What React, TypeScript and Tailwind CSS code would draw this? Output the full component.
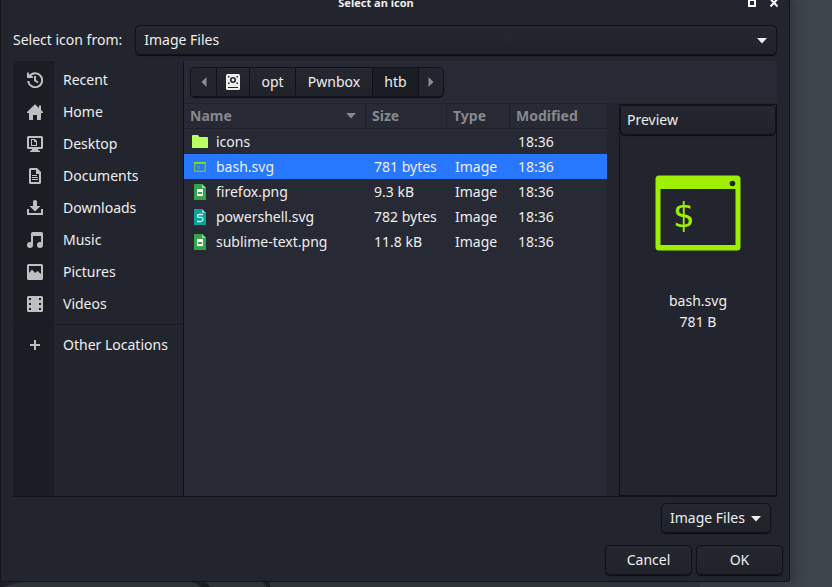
import React from "react";

const places = ["Recent", "Home", "Desktop", "Documents", "Downloads", "Music", "Pictures", "Videos"];

type FileRow = { name: string; size: string; type: string; modified: string; kind: "folder" | "bash" | "png" | "svg" };

const files: FileRow[] = [
  { name: "icons", size: "", type: "", modified: "18:36", kind: "folder" },
  { name: "bash.svg", size: "781 bytes", type: "Image", modified: "18:36", kind: "bash" },
  { name: "firefox.png", size: "9.3 kB", type: "Image", modified: "18:36", kind: "png" },
  { name: "powershell.svg", size: "782 bytes", type: "Image", modified: "18:36", kind: "svg" },
  { name: "sublime-text.png", size: "11.8 kB", type: "Image", modified: "18:36", kind: "png" },
];

const raised =
  "border border-[#101217] rounded-[5px] bg-linear-to-b from-[#262831] to-[#20222a] shadow-[0_1px_1px_#0b0c10]";

function PlaceIcon({ name }: { name: string }) {
  return (
    <svg width="16" height="16" viewBox="0 0 16 16" fill="#bfbfc1" aria-hidden="true">
      {name === "Recent" && (
        <>
          <path d="M2.400 4.200A7 7 0 1 1 1.200 9" fill="none" stroke="#bfbfc1" strokeWidth="2" />
          <path d="M0 .5h1.500L2.500 3 6 4.500V6H0z" />
          <path d="M8 4v4.500l3 2" fill="none" stroke="#bfbfc1" strokeWidth="2" />
        </>
      )}
      {name === "Home" && (
        <path d="M8 .2 0 8v1h2v6.2q0 .8.8.8H6v-5h4v5h3.2q.8 0 .8-.8V9h2V8l-2-2V1.500h-2V4z" />
      )}
      {name === "Desktop" && (
        <>
          <path fillRule="evenodd" d="M1.500 0h13Q16 0 16 1.500V11.500Q16 13 14.500 13H11v1l2 1v1H3v-1l2-1v-1H1.500Q0 13 0 11.500V1.500Q0 0 1.500 0zM2 2v9h12V2z" />
          <path fillRule="evenodd" d="M4 3h4l2 2v5H4zM5 4v5h4V6H7V4z" />
        </>
      )}
      {name === "Documents" && (
        <>
          <path fillRule="evenodd" d="M3.500 0H10l4 4v10.500Q14 16 12.500 16h-9Q2 16 2 14.500v-13Q2 0 3.500 0zM4 2v12h8V6H9V2z" />
          <path d="M5 7h5v1H5zM5 9h6v1H5zM5 11h6v1H5z" />
        </>
      )}
      {name === "Downloads" && (
        <>
          <path d="M6 1.500Q6 0 8 0t2 1.500V6h3.500L8 11.500 2.500 6H6z" />
          <path d="M0 9h2v4h12V9h2v6H0z" />
        </>
      )}
      {name === "Music" && (
        <>
          <path d="M4 1.500Q4 0 5.500 0h9Q16 0 16 1.500V12h-2V4H6v9H4z" />
          <circle cx="3" cy="13" r="3" />
          <circle cx="13" cy="13" r="3" />
        </>
      )}
      {name === "Pictures" && (
        <path fillRule="evenodd" d="M1.500 0h13Q16 0 16 1.500v13Q16 16 14.500 16h-13Q0 16 0 14.500v-13Q0 0 1.500 0zM2 2v7l3-3.500L8 9l2.500-2L14 10V2z" />
      )}
      {name === "Videos" && (
        <path
          fillRule="evenodd"
          d="M1.500 0h13Q16 0 16 1.500v13Q16 16 14.500 16h-13Q0 16 0 14.500v-13Q0 0 1.500 0zM2 2v2h2V2zM2 7v2h2V7zM2 12v2h2v-2zM12 2v2h2V2zM12 7v2h2V7zM12 12v2h2v-2z"
        />
      )}
      {name === "Other Locations" && <path d="M7 3h2v4h4v2H9v4H7V9H3V7h4z" />}
    </svg>
  );
}

function Place({ name }: { name: string }) {
  return (
    <li>
      <button type="button" className="flex h-8 w-full items-center pl-[14px] text-left">
        <PlaceIcon name={name} />
        <span className="ml-5">{name}</span>
      </button>
    </li>
  );
}

function FileIcon({ kind }: { kind: FileRow["kind"] }) {
  return (
    <svg width="16" height="16" viewBox="0 0 16 16" className="shrink-0" aria-hidden="true">
      {kind === "folder" && <path d="M0 2q0-1 1-1h5l1.500 2H15q1 0 1 1v10H0z" fill="#b9ff66" />}
      {kind === "bash" && (
        <>
          <path fillRule="evenodd" d="M2 3h12v10H2zM3.500 5v6.500h9V5z" fill="#72b84e" />
          <path d="M2 3h12v1.500H2z" fill="#8fe01d" />
          <path d="M7.500 7H5.500v1.200h2v1.600h-2" fill="none" stroke="#58a673" />
        </>
      )}
      {kind === "png" && (
        <>
          <path d="M2 0h8l4 4v12H2z" fill="#37a44d" />
          <path d="M10 0v4h4z" fill="#9cd5a6" />
          <path fillRule="evenodd" d="M5 5h6v7H5zM6 8v2h4V8z" fill="#fff" />
        </>
      )}
      {kind === "svg" && (
        <>
          <path d="M2 0h8l4 4v12H2z" fill="#0da39b" />
          <path d="M10 0v4h4z" fill="#86d3ce" />
          <path d="M11 5.500H7Q5.500 5.500 5.500 7T7 8.300h2.500q1.500 0 1.500 2T9 12.500H5" fill="none" stroke="#c5efec" strokeWidth="1.300" />
        </>
      )}
    </svg>
  );
}

function Arrow({ className }: { className?: string }) {
  return (
    <svg width="10" height="6" viewBox="0 0 10 6" className={className} aria-hidden="true">
      <path d="M0 0h10L5 5.500z" fill="currentColor" />
    </svg>
  );
}

function SideArrow({ flip }: { flip?: boolean }) {
  return (
    <svg width="6" height="10" viewBox="0 0 6 10" className={flip ? "rotate-180" : ""} aria-hidden="true">
      <path d="M5.500 0v10L.5 5z" fill="#8c8d90" />
    </svg>
  );
}

export default function App() {
  return (
    <div className="relative min-h-screen overflow-hidden bg-[#3d444a] pr-[42px] pb-[5px] font-['Noto_Sans',sans-serif] text-sm text-[#eeeeec]">
      <svg className="absolute bottom-0 left-0" width="832" height="14" aria-hidden="true">
        <path d="M0 0h700v14H0z" fill="#32373c" />
        <path d="M0 8h30q-18 2-26 6H0z" fill="#14171b" />
        <path d="M188 8h15q5 2 7 6h-9q-4-4-13-6z" fill="#0e1013" />
        <path d="M262 8h8v6h-3q-4-3-5-6z" fill="#0e1013" />
      </svg>

      <main className="relative rounded-b-[3px] border border-t-0 border-[#13151a] bg-[#23252e] px-3 pb-[6px] shadow-[0_0_14px_2px_#2b3036]">
        <header className="relative flex h-[25px] items-start justify-center pr-[38px]">
          <h1 className="text-[11px] leading-[6px] font-bold">Select an icon</h1>
          <div className="absolute top-0 -right-px flex gap-[14px]">
            <button type="button" aria-label="Maximize" className="h-[7px] w-2 overflow-hidden">
              <svg width="8" height="7" viewBox="0 0 8 7" aria-hidden="true">
                <path d="M1 0h6v6H1z" fill="none" stroke="#fff" strokeWidth="2" />
              </svg>
            </button>
            <button type="button" aria-label="Close" className="h-[7px] w-2">
              <svg width="8" height="7" viewBox="0 0 8 7" aria-hidden="true">
                <path d="M.5-1 7.500 6.500M7.500-1 .5 6.500" stroke="#fff" strokeWidth="2" />
              </svg>
            </button>
          </div>
        </header>

        <div className="flex items-center gap-[13px]">
          <label htmlFor="source">Select icon from:</label>
          <div className="relative flex-1">
            <select id="source" className={`block h-[30px] w-full appearance-none px-2 ${raised}`}>
              <option>Image Files</option>
            </select>
            <Arrow className="pointer-events-none absolute top-[13px] right-[10px]" />
          </div>
        </div>

        <section className="mt-[6px] flex h-[436px] border-b border-[#101217]">
          <nav className="w-[171px] shrink-0 border-r border-[#101217] bg-linear-to-r from-[#1b1d24] from-[41px] to-[#23252e] to-[41px]">
            <ul className="pt-[3px]">
              {places.map((p) => (
                <Place key={p} name={p} />
              ))}
            </ul>
            <ul className="mt-1 border-t border-[#1c1e25] pt-1">
              <Place name="Other Locations" />
            </ul>
          </nav>

          <div className="flex min-w-0 flex-1 flex-col">
            <div className="bg-[#272935] px-[6px] pt-[6px] pb-[6px]">
              <div className={`flex h-[30px] w-[254px] overflow-hidden ${raised}`}>
                <button type="button" aria-label="Back" className="flex w-[25px] items-center justify-center bg-[#23252e]">
                  <SideArrow />
                </button>
                <button type="button" aria-label="File system" className="flex w-[33px] items-center justify-center border-l border-[#101217]">
                  <svg width="14" height="16" viewBox="0 0 14 16" aria-hidden="true">
                    <rect width="14" height="16" rx="1.500" fill="#eeeeec" />
                    <circle cx="7" cy="6" r="2.200" fill="none" stroke="#23252e" strokeWidth="1.600" />
                    <path d="M2 2h1.500v1.500H2zM10.500 2H12v1.500h-1.500zM2 8.500h1.500V10H2zM10.500 8.500H12V10h-1.500zM2 13h10v1H2z" fill="#23252e" />
                  </svg>
                </button>
                <button type="button" className="w-[46px] border-l border-[#101217]">opt</button>
                <button type="button" className="w-[77px] border-l border-[#101217]">Pwnbox</button>
                <button type="button" className="w-[46px] border-l border-[#101217] bg-[#1b1d24]">htb</button>
                <button type="button" aria-label="Forward" className="flex flex-1 items-center justify-center border-l border-[#101217] bg-[#23252e]">
                  <SideArrow flip />
                </button>
              </div>
            </div>

            <div className="flex min-h-0 flex-1 gap-3">
              <div className="min-w-0 flex-1 bg-[#272935]">
                <table className="w-full table-fixed border-separate border-spacing-0 text-left">
                  <colgroup>
                    <col />
                    <col className="w-[81px]" />
                    <col className="w-[63px]" />
                    <col className="w-[97px]" />
                  </colgroup>
                  <thead>
                    <tr className="h-[26px] text-[#87888c] [&>th]:border-y [&>th]:border-[#20222b] [&>th]:p-0 [&>th]:pl-[6px] [&>th]:leading-6">
                      <th className="border-r">
                        <div className="flex items-center justify-between pr-[9px]">
                          Name
                          <Arrow />
                        </div>
                      </th>
                      <th className="border-r">Size</th>
                      <th className="border-r">Type</th>
                      <th>Modified</th>
                    </tr>
                  </thead>
                  <tbody>
                    {files.map((f) => (
                      <tr
                        key={f.name}
                        className={`h-[25px] [&>td]:p-0 [&>td]:pl-2 [&>td]:leading-5 ${f.kind === "bash" ? "bg-[#2777ff]" : ""}`}
                      >
                        <td>
                          <div className="flex items-center gap-2">
                            <FileIcon kind={f.kind} />
                            {f.name}
                          </div>
                        </td>
                        <td>{f.size}</td>
                        <td>{f.type}</td>
                        <td>{f.modified}</td>
                      </tr>
                    ))}
                  </tbody>
                </table>
              </div>

              <aside className="mt-px flex w-[158px] shrink-0 flex-col items-center border border-[#101217]">
                <button type="button" className={`h-[30px] w-full px-[6px] text-left ${raised}`}>
                  Preview
                </button>
                <svg className="mt-10" width="86" height="76" viewBox="0 0 86 76" role="img" aria-label="bash.svg preview">
                  <path
                    fillRule="evenodd"
                    d="M4 .5h78q3.500 0 3.500 3.500v68q0 3.500-3.500 3.500H4Q.5 75.500.5 72V4Q.5.500 4 .5zM5.500 14v56h75V14z"
                    fill="#9fef00"
                  />
                  <circle cx="77.500" cy="8.500" r="2.800" fill="#23252e" />
                  <text x="18" y="52" fontSize="34" fill="#9fef00" fontFamily="DejaVu Sans, sans-serif">$</text>
                </svg>
                <p className="mt-[39px] text-center leading-[21px]">
                  bash.svg
                  <br />
                  781 B
                </p>
              </aside>
            </div>
          </div>
        </section>

        <div className="mt-[6px] flex justify-end pr-[6px]">
          <div className="relative w-[110px]">
            <select aria-label="File type" className={`block h-[30px] w-full appearance-none px-2 ${raised}`}>
              <option>Image Files</option>
            </select>
            <Arrow className="pointer-events-none absolute top-[13px] right-[10px]" />
          </div>
        </div>

        <footer className="-mr-[6px] mt-3 flex justify-end gap-1">
          <button type="button" className={`h-[30px] w-[87px] ${raised}`}>Cancel</button>
          <button type="button" className={`h-[30px] w-[87px] ${raised}`}>OK</button>
        </footer>
      </main>
    </div>
  );
}
